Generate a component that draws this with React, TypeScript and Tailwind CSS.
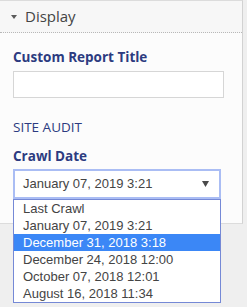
import React from "react";

const options = [
  "Last Crawl",
  "January 07, 2019 3:21",
  "December 31, 2018 3:18",
  "December 24, 2018 12:00",
  "October 07, 2018 12:01",
  "August 16, 2018 11:34",
];

export default function App() {
  const selected = 2;

  return (
    <div className="w-[247px] h-[307px] bg-[#efefef] flex items-start overflow-hidden">
      <div className="w-[243px] border-r border-[#d2d2d2] border-t border-t-[#dcdcdc] bg-[#fcfcfc] border-b border-b-[#dcdcdc]">
        {/* Panel header */}
        <div className="h-[32px] flex items-center gap-[8px] pl-[11px] bg-[#f7f7f7] border-b border-dotted border-[#b8b8b8]">
          <svg width="6" height="4" viewBox="0 0 6 4" className="mt-[1px]">
            <path d="M0 0 L6 0 L3 4 Z" fill="#5a5a5a" />
          </svg>
          <span className="text-[15px] leading-none text-[#444] font-['Open_Sans',sans-serif]">
            Display
          </span>
        </div>

        {/* Panel body */}
        <div className="px-[13px] pt-[15px] pb-[24px] font-['Open_Sans',sans-serif]">
          <div className="text-[13.5px] leading-[19px] font-bold text-[#2c3b80]">
            Custom Report Title
          </div>
          <div className="mt-[4px] w-[211px] h-[27px] bg-white border border-[#d6d6d6]" />

          <div className="mt-[20px] text-[13.5px] leading-[18px] text-[#2c3b80]">
            SITE AUDIT
          </div>
          <div className="mt-[11px] text-[13.5px] leading-[19px] font-bold text-[#2c3b80]">
            Crawl Date
          </div>

          <div className="relative mt-[3px] w-[208px]">
            <div className="h-[30px] bg-white border-2 border-[#aabdf4] flex items-center justify-between pl-[8px] pr-[10px] font-['Liberation_Sans',Arial,sans-serif] text-[13px] text-[#444]">
              <span>{options[1]}</span>
              <svg width="7" height="6" viewBox="0 0 7 6">
                <path d="M0 0 L7 0 L3.5 6 Z" fill="#4a4a4a" />
              </svg>
            </div>

            {/* Open list */}
            <div className="absolute left-0 top-full w-[208px] bg-white border border-[#7589d6] font-['Liberation_Sans',Arial,sans-serif] text-[13px]">
              {options.map((o, i) => (
                <div
                  key={o}
                  className={
                    i === selected
                      ? "h-[17px] leading-[17px] pl-[9px] bg-[#3b87f6] text-white"
                      : "h-[17px] leading-[17px] pl-[9px] text-[#444]"
                  }
                >
                  {o}
                </div>
              ))}
            </div>
          </div>
        </div>
      </div>
    </div>
  );
}
